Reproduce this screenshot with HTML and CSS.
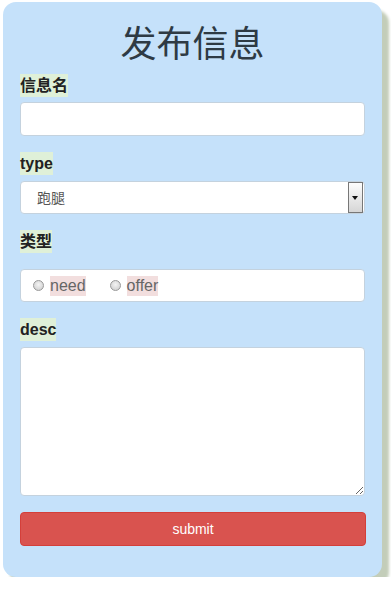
FILE: index.html
```html
<!DOCTYPE html>
<html lang="zh-CN">
<head>
    <meta charset="UTF-8">
    <meta name="viewport" content="width=device-width, initial-scale=1.0">
    <title>发布信息</title>
    <link rel="stylesheet" href="styles.css">
</head>
<body>
    <div class="card">
        <h1>发布信息</h1>
        <form>
            <div class="form-group">
                <label for="name">信息名</label>
                <input class="form-control" type="text" id="name">
            </div>
            <div class="form-group">
                <label for="type">type</label>
                <div class="select-wrap">
                    <select class="form-control" id="type">
                        <option>跑腿</option>
                    </select>
                    <span class="select-btn"><span class="arrow"></span></span>
                </div>
            </div>
            <div class="form-group">
                <label>类型</label>
                <div class="form-control radios">
                    <label class="radio"><input type="radio" name="kind"><span>need</span></label>
                    <label class="radio"><input type="radio" name="kind"><span>offer</span></label>
                </div>
            </div>
            <div class="form-group">
                <label for="desc">desc</label>
                <textarea class="form-control" id="desc"></textarea>
            </div>
            <button type="button" class="btn-submit">submit</button>
        </form>
    </div>
</body>
</html>
```

FILE: styles.css
```css
body {
    margin: 0;
    padding: 0;
    background-color: #fff;
    font-family: "Liberation Sans", "Noto Sans CJK SC", sans-serif;
    color: #333;
}
.card {
    width: 345px;
    margin: 2px 0 0 3px;
    padding: 19px 17px 31px;
    background-color: #c5e1fa;
    border-radius: 13px;
    box-shadow: 7px 8px 3px #c3cdb9;
}
h1 {
    margin: 0 0 13px;
    font-family: "Noto Sans CJK SC", sans-serif;
    font-size: 36px;
    font-weight: 400;
    line-height: 40px;
    text-align: center;
    color: #2e3a44;
}
.form-group {
    margin-bottom: 16px;
}
.form-group > label {
    display: inline-block;
    margin-bottom: 5px;
    font-size: 16px;
    font-weight: 700;
    line-height: 23px;
    color: #222;
    background-color: #dff0d8;
}
.form-control {
    display: block;
    box-sizing: border-box;
    width: 345px;
    height: 34px;
    margin: 0;
    padding: 6px 12px;
    font-family: inherit;
    font-size: 14px;
    color: #555;
    background-color: #fff;
    border: 1px solid #c4d2de;
    border-radius: 4px;
}
.select-wrap {
    position: relative;
}
select.form-control {
    -webkit-appearance: none;
    appearance: none;
    height: 33px;
    padding-left: 16px;
    margin-top: 1px;
}
.select-btn {
    position: absolute;
    top: 1px;
    right: 2px;
    width: 15px;
    height: 31px;
    box-sizing: border-box;
    border: 1px solid #777;
    background: linear-gradient(#fdfdfd, #d6d6d6);
    pointer-events: none;
}
.arrow {
    position: absolute;
    top: 13px;
    left: 3px;
    width: 0;
    height: 0;
    border-left: 3.5px solid transparent;
    border-right: 3.5px solid transparent;
    border-top: 4px solid #111;
}
.radios {
    display: flex;
    align-items: center;
    gap: 24px;
    margin-top: 11px;
    padding: 0 0 0 12px;
    height: 33px;
}
.radio {
    display: flex;
    align-items: center;
    gap: 6px;
    font-size: 16px;
    color: #666;
}
.radio span {
    background-color: #f2dede;
    line-height: 20px;
}
.radio input {
    -webkit-appearance: none;
    appearance: none;
    width: 11px;
    height: 11px;
    margin: 0;
    border: 1px solid #999;
    border-radius: 50%;
    background: radial-gradient(circle at 50% 40%, #f4f4f4, #c9c9c9);
}
textarea.form-control {
    height: 149px;
    margin-top: 1px;
    resize: vertical;
}
.btn-submit {
    display: block;
    width: 346px;
    height: 34px;
    margin-top: 0;
    font-family: inherit;
    font-size: 14px;
    color: #fff;
    background-color: #d9534f;
    border: 1px solid #d43f3a;
    border-radius: 4px;
}
```
